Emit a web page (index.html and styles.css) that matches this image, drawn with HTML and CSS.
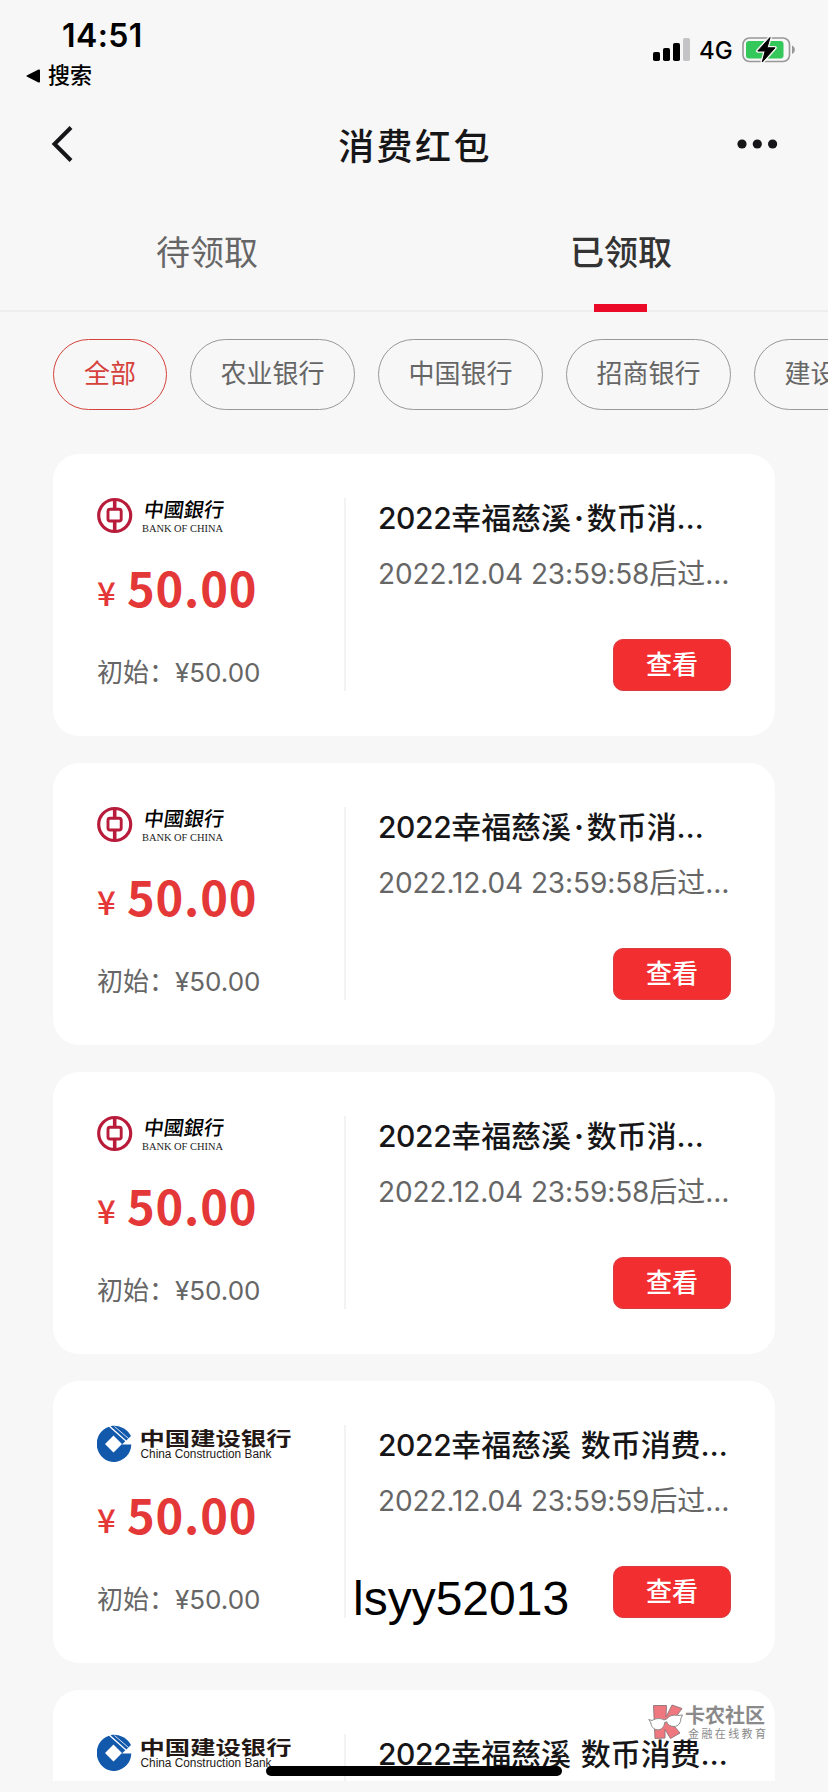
FILE: index.html
```html
<!DOCTYPE html>
<html lang="zh-CN">
<head>
<meta charset="utf-8">
<title>消费红包</title>
<link rel="stylesheet" href="styles.css">
</head>
<body>
<div class="screen">
  <header class="status">
    <div class="status-left">
      <div class="time">14:51</div>
      <div class="back-app">
        <svg width="15" height="14" viewBox="0 0 15 14"><path d="M1.200 6.200 12.500.6Q14 0 14 1.500V12.500Q14 14 12.500 13.400L1.200 7.800Q-.4 7 1.200 6.200Z"/></svg>
        <span>搜索</span>
      </div>
    </div>
    <div class="status-right">
      <svg width="38" height="24" viewBox="0 0 38 24">
        <rect x="0" y="14" width="7" height="9" rx="1.800"/><rect x="10" y="10" width="7" height="13" rx="1.800"/><rect x="20" y="5" width="7" height="18" rx="1.800"/><rect x="30" y="0" width="7" height="23" rx="1.800" fill="#c4c4c6"/>
      </svg>
      <span class="network">4G</span>
      <svg width="54" height="28" viewBox="0 0 54 28">
        <rect x="1" y="2" width="46.500" height="23.500" rx="6.500" fill="none" stroke="#98989a" stroke-width="1.600"/>
        <rect x="4" y="5" width="37.500" height="17.500" rx="3" fill="#34c759"/>
        <path d="M50 9.500c3.800 1.600 3.800 7 0 8.600Z" fill="#98989a"/>
        <path d="M28 1.500 15.800 15H23.200L20.300 26 33 11.800H25Z" stroke="#f7f7f7" stroke-width="3.600" stroke-linejoin="round"/>
        <path d="M28 1.500 15.800 15H23.200L20.300 26 33 11.800H25Z" stroke="#000" stroke-width="1" stroke-linejoin="round"/>
      </svg>
    </div>
  </header>

  <nav class="navbar">
    <svg width="22" height="36" viewBox="0 0 22 36"><path d="M20 1.500 3.500 18 20 34.500" fill="none" stroke="#161618" stroke-width="4"/></svg>
    <h1>消费红包</h1>
    <svg width="42" height="10" viewBox="0 0 42 10" fill="#161618"><circle cx="5" cy="5" r="4.600"/><circle cx="20.300" cy="5" r="4.600"/><circle cx="35.600" cy="5" r="4.600"/></svg>
  </nav>

  <div class="tabs">
    <div class="tab">待领取</div>
    <div class="tab active">已领取</div>
  </div>

  <div class="filters">
    <div class="pill on">全部</div>
    <div class="pill">农业银行</div>
    <div class="pill">中国银行</div>
    <div class="pill">招商银行</div>
    <div class="pill">建设银行</div>
  </div>

  <main class="list">
    <article class="card">
      <div class="amount">
        <svg class="logo" viewBox="0 0 200 44">
          <g fill="none" stroke="#b81c3a">
            <circle cx="17.700" cy="21.500" r="16" stroke-width="3.200"/>
            <rect x="11" y="15.200" width="13.200" height="11.800" rx="2" stroke-width="2.900"/>
            <path d="M17.700 5v10M17.700 27v11" stroke-width="3.600"/>
          </g>
          <text class="boc-cn" transform="translate(46 23) skewX(-8)" textLength="80">中國銀行</text>
          <text class="boc-en" x="45" y="38" textLength="81" lengthAdjust="spacingAndGlyphs">BANK OF CHINA</text>
        </svg>
        <div class="price"><span class="yen">¥</span><span class="value">50.00</span></div>
        <div class="initial">初始：<span>¥50.00</span></div>
      </div>
      <div class="detail">
        <div class="title"><span class="num">2022</span>幸福慈溪<span class="dot">·</span>数币消<span class="more">…</span></div>
        <div class="expiry"><span class="date">2022.12.04 23:59:58</span>后过<span class="more">…</span></div>
        <button class="view">查看</button>
      </div>
    </article>
    <article class="card">
      <div class="amount">
        <svg class="logo" viewBox="0 0 200 44">
          <g fill="none" stroke="#b81c3a">
            <circle cx="17.700" cy="21.500" r="16" stroke-width="3.200"/>
            <rect x="11" y="15.200" width="13.200" height="11.800" rx="2" stroke-width="2.900"/>
            <path d="M17.700 5v10M17.700 27v11" stroke-width="3.600"/>
          </g>
          <text class="boc-cn" transform="translate(46 23) skewX(-8)" textLength="80">中國銀行</text>
          <text class="boc-en" x="45" y="38" textLength="81" lengthAdjust="spacingAndGlyphs">BANK OF CHINA</text>
        </svg>
        <div class="price"><span class="yen">¥</span><span class="value">50.00</span></div>
        <div class="initial">初始：<span>¥50.00</span></div>
      </div>
      <div class="detail">
        <div class="title"><span class="num">2022</span>幸福慈溪<span class="dot">·</span>数币消<span class="more">…</span></div>
        <div class="expiry"><span class="date">2022.12.04 23:59:58</span>后过<span class="more">…</span></div>
        <button class="view">查看</button>
      </div>
    </article>
    <article class="card">
      <div class="amount">
        <svg class="logo" viewBox="0 0 200 44">
          <g fill="none" stroke="#b81c3a">
            <circle cx="17.700" cy="21.500" r="16" stroke-width="3.200"/>
            <rect x="11" y="15.200" width="13.200" height="11.800" rx="2" stroke-width="2.900"/>
            <path d="M17.700 5v10M17.700 27v11" stroke-width="3.600"/>
          </g>
          <text class="boc-cn" transform="translate(46 23) skewX(-8)" textLength="80">中國銀行</text>
          <text class="boc-en" x="45" y="38" textLength="81" lengthAdjust="spacingAndGlyphs">BANK OF CHINA</text>
        </svg>
        <div class="price"><span class="yen">¥</span><span class="value">50.00</span></div>
        <div class="initial">初始：<span>¥50.00</span></div>
      </div>
      <div class="detail">
        <div class="title"><span class="num">2022</span>幸福慈溪<span class="dot">·</span>数币消<span class="more">…</span></div>
        <div class="expiry"><span class="date">2022.12.04 23:59:58</span>后过<span class="more">…</span></div>
        <button class="view">查看</button>
      </div>
    </article>
    <article class="card">
      <div class="amount">
        <svg class="logo" viewBox="0 0 200 44">
          <path fill="#1259ac" fill-rule="evenodd" d="M34.300 23.500A17.300 18 0 1 1 12 5.700L28.300 20.300 25 23.500ZM16.500 14.500 25 23 16.500 31.500 8 23Z"/>
          <path fill="#1259ac" d="M13.500 5.200C22 3.500 30 8 34 15L29.300 19.400Z"/>
          <path d="M17.500 5.500 31.500 17.500" stroke="#fff" stroke-width=".8"/>
          <text class="ccb-cn" transform="translate(42.500 24.500) scale(1 .86)" textLength="152" lengthAdjust="spacingAndGlyphs">中国建设银行</text>
          <text class="ccb-en" x="43.500" y="37" textLength="131" lengthAdjust="spacingAndGlyphs">China Construction Bank</text>
        </svg>
        <div class="price"><span class="yen">¥</span><span class="value">50.00</span></div>
        <div class="initial">初始：<span>¥50.00</span></div>
      </div>
      <div class="detail">
        <div class="title"><span class="num">2022</span>幸福慈溪<span class="gap"> </span>数币消费<span class="more">…</span></div>
        <div class="expiry"><span class="date">2022.12.04 23:59:59</span>后过<span class="more">…</span></div>
        <button class="view">查看</button>
      </div>
      <div class="user-tag">lsyy52013</div>
    </article>
    <article class="card">
      <div class="amount">
        <svg class="logo" viewBox="0 0 200 44">
          <path fill="#1259ac" fill-rule="evenodd" d="M34.300 23.500A17.300 18 0 1 1 12 5.700L28.300 20.300 25 23.500ZM16.500 14.500 25 23 16.500 31.500 8 23Z"/>
          <path fill="#1259ac" d="M13.500 5.200C22 3.500 30 8 34 15L29.300 19.400Z"/>
          <path d="M17.500 5.500 31.500 17.500" stroke="#fff" stroke-width=".8"/>
          <text class="ccb-cn" transform="translate(42.500 24.500) scale(1 .86)" textLength="152" lengthAdjust="spacingAndGlyphs">中国建设银行</text>
          <text class="ccb-en" x="43.500" y="37" textLength="131" lengthAdjust="spacingAndGlyphs">China Construction Bank</text>
        </svg>
      </div>
      <div class="detail">
        <div class="title"><span class="num">2022</span>幸福慈溪<span class="gap"> </span>数币消费<span class="more">…</span></div>
      </div>
    </article>
  </main>

  <div class="watermark">
    <svg width="36" height="36" viewBox="0 0 36 36">
      <path d="M5.500 1.500H18.500L18 13 24 1 34 4.500 23.500 19 32 29 22.500 34.500 17 25.500V34L7 34.500Z" fill="#ee7780" stroke="#8c7476" stroke-width=".9"/>
      <path d="M.8 15.500 4 16.500C8 14 13 14 16 16L19 14.800C21 11.500 26 10.500 29.500 11.500L34.500 11 32.800 14.500C33 19 30 22.500 26 22.500 22 22.500 19.500 20.500 18.800 17.800L16.600 18.500C16.500 22.500 13.500 26 9.500 25.800 5.500 25.500 3 22.500 3 19Z" fill="#fff" stroke="#8b8b8b" stroke-width="1"/>
    </svg>
    <div class="mark-text"><b>卡农社区</b><span>金融在线教育</span></div>
  </div>
  <div class="home-bar"></div>
</div>
</body>
</html>
```
FILE: styles.css
```css
* { box-sizing: border-box; }

body {
  margin: 0;
  background: #f7f7f7;
  font-family: Inter, "Noto Sans CJK SC", sans-serif;
  color: #161618;
}

.screen {
  position: relative;
  width: 828px;
  height: 1792px;
  overflow: hidden;
  display: flex;
  flex-direction: column;
}

.status {
  height: 96px;
  flex: none;
  display: flex;
  justify-content: space-between;
  color: #000;
}

.status-left { padding-top: 16px; }

.time {
  padding-left: 62px;
  font-size: 32px;
  line-height: 40px;
  font-weight: 600;
  letter-spacing: 0.4px;
}

.back-app {
  display: flex;
  align-items: center;
  gap: 7px;
  padding-left: 26px;
  height: 40px;
  font-size: 22px;
  line-height: 30px;
  font-weight: 500;
}

.back-app span { margin-top: -3px; }

.status-right {
  display: flex;
  align-items: center;
  height: 100px;
  padding-right: 32px;
}

.network {
  font-size: 24px;
  font-weight: 500;
  width: 33px;
  margin: 0 10px 0 8px;
}

.navbar {
  height: 100px;
  flex: none;
  display: flex;
  align-items: center;
  padding: 0 49px 4px 51px;
}

.navbar h1 {
  flex: 1;
  margin: 6px 0 0 20px;
  text-align: center;
  font-size: 36px;
  line-height: 50px;
  font-weight: 500;
  letter-spacing: 2.4px;
}

.tabs {
  height: 116px;
  flex: none;
  display: flex;
  border-bottom: 2px solid #eeeeee;
}

.tab {
  flex: 1;
  position: relative;
  text-align: center;
  font-size: 34px;
  line-height: 114px;
  color: #666;
}

.tab.active {
  color: #333;
  font-weight: 500;
}

.tab.active::after {
  content: "";
  position: absolute;
  left: 180px;
  bottom: -2px;
  width: 53px;
  height: 8px;
  background: #eb0a28;
}

.filters {
  display: flex;
  flex: none;
  gap: 23px;
  padding: 27px 0 0 53px;
  height: 142px;
}

.pill {
  flex: none;
  width: 165px;
  height: 71px;
  border: 1px solid #999;
  border-radius: 36px;
  text-align: center;
  font-size: 26px;
  line-height: 67px;
  color: #666;
}

.pill.on {
  width: 114px;
  color: #d5423c;
  border-color: #d5423c;
}

.list {
  height: 1327px;
  flex: none;
  overflow: hidden;
  padding: 0 53px;
}

.card {
  position: relative;
  display: flex;
  height: 282px;
  margin-bottom: 27px;
  padding: 44px 44px 45px;
  border-radius: 26px;
  background: #fff;
}

.amount {
  width: 249px;
  flex: none;
  border-right: 2px solid #f3f3f3;
  margin-right: 32px;
  display: flex;
  flex-direction: column;
}

.logo {
  display: block;
  flex: none;
  width: 200px;
  height: 44px;
  margin-top: -4px;
}

.boc-cn { font: 500 20px "Noto Sans CJK TC", sans-serif; }
.boc-en { font: 10.5px "Liberation Serif", serif; fill: #222; }
.ccb-cn { font: 700 22px "Noto Sans CJK SC", sans-serif; fill: #231815; }
.ccb-en { font: 12.5px "Liberation Sans", sans-serif; fill: #231815; }

.price {
  display: flex;
  align-items: baseline;
  margin-top: 13px;
  height: 72px;
  line-height: 72px;
  color: #e43838;
  font-family: "Noto Sans CJK SC", sans-serif;
}

.yen {
  position: relative;
  top: -1px;
  width: 30px;
  font-size: 33px;
  font-weight: 500;
}

.value {
  font-size: 47px;
  font-weight: 700;
  letter-spacing: 0.8px;
}

.initial {
  margin-top: 30px;
  font-size: 26px;
  line-height: 40px;
  color: #666;
  white-space: nowrap;
}

.detail {
  flex: 1;
  display: flex;
  flex-direction: column;
  white-space: nowrap;
}

.title {
  font-size: 30px;
  line-height: 40px;
  font-weight: 500;
  letter-spacing: -0.1px;
}

.title .num { letter-spacing: -0.4px; }
.title .dot { display: inline-block; width: 16px; text-align: center; font-weight: 700; }
.title .gap { display: inline-block; width: 10px; }

.expiry {
  margin-top: 16px;
  font-size: 28px;
  line-height: 40px;
  letter-spacing: -0.1px;
  color: #666;
}

.view {
  align-self: flex-end;
  width: 118px;
  height: 53px;
  margin-top: 45px;
  padding: 0 0 4px;
  border: 1px solid #dc3c40;
  border-radius: 10px;
  background: #f22e31;
  color: #fff;
  font: 500 26px/46px "Noto Sans CJK SC", sans-serif;
}

.user-tag {
  position: absolute;
  left: 300px;
  top: 191px;
  font: 48px/54px "Liberation Sans", sans-serif;
  color: #000;
}

.watermark {
  position: absolute;
  left: 648px;
  top: 1704px;
  display: flex;
  gap: 1px;
  color: #8a8a8a;
}

.mark-text { display: flex; flex-direction: column; }
.mark-text b { font-size: 20px; line-height: 24px; font-weight: 700; }
.mark-text span { padding-left: 3px; font-size: 11px; line-height: 12px; letter-spacing: 2.4px; }

.home-bar {
  position: absolute;
  left: 266px;
  top: 1766px;
  width: 296px;
  height: 10px;
  border-radius: 5px;
  background: #000;
}
```
